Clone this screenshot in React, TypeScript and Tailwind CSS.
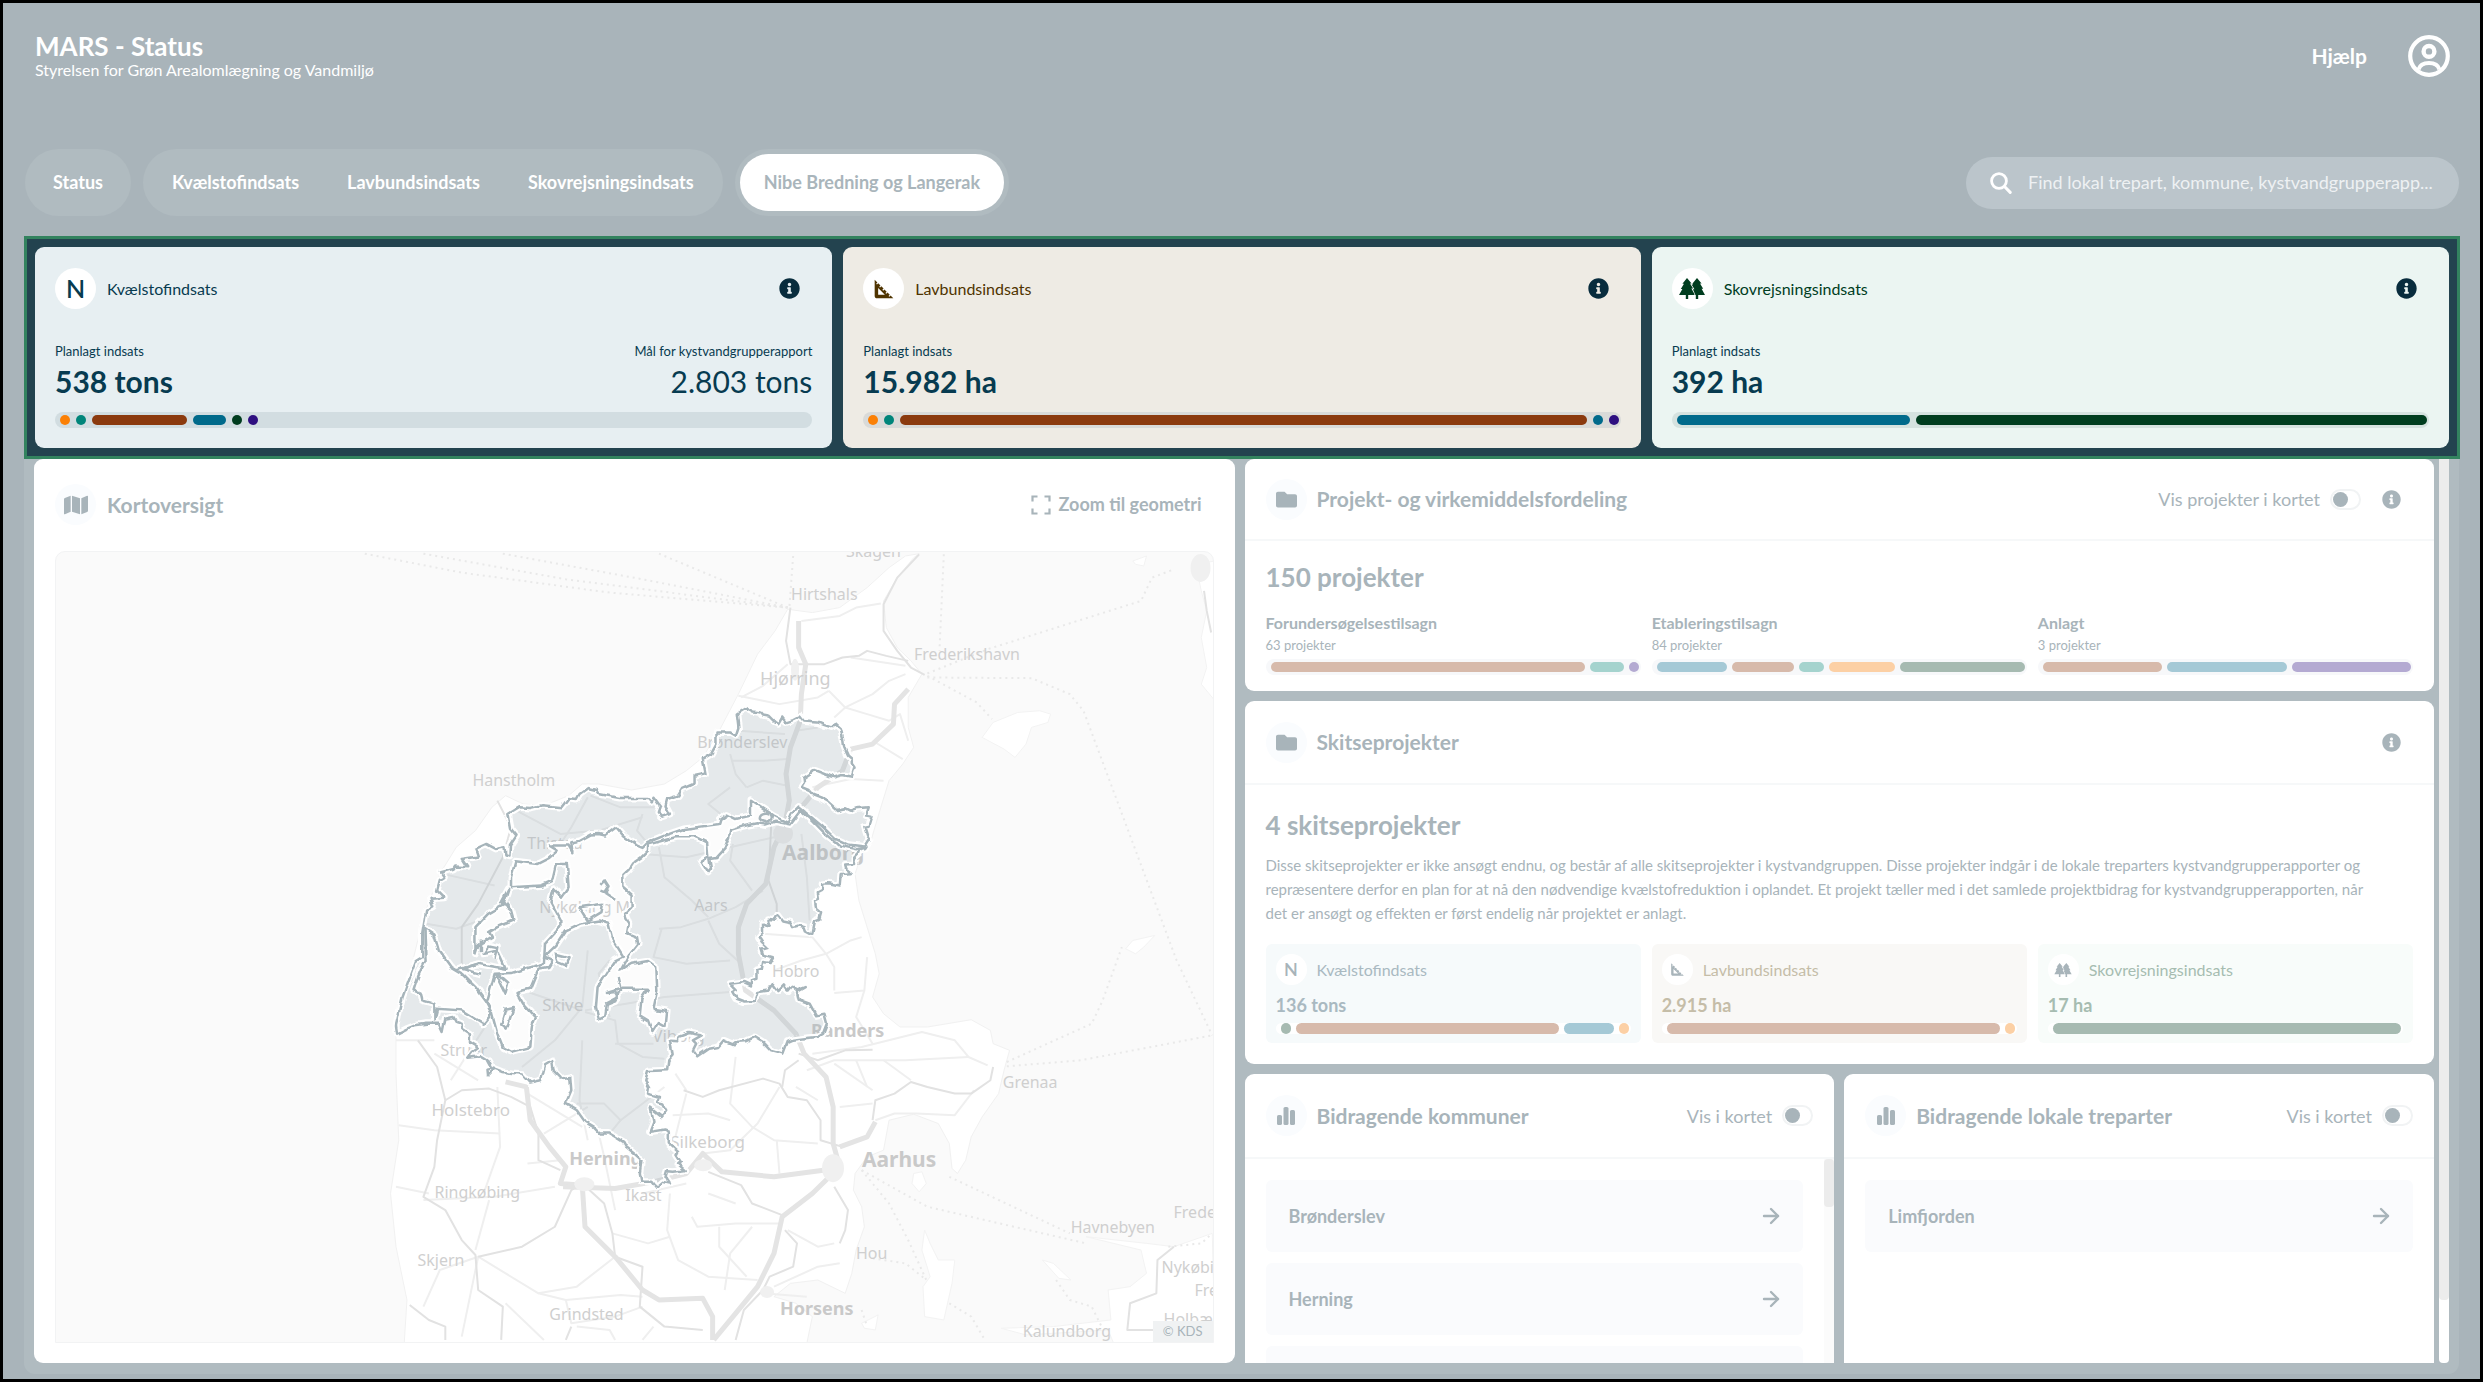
import React from 'react';
import { FaInfoCircle, FaMap, FaFolder } from 'react-icons/fa';
import { MdSquareFoot } from 'react-icons/md';
import { ArrowRight } from 'lucide-react';

type Segment = { color: string; size: number };

const ORANGE = 'bg-[#fb8005]';
const TEAL = 'bg-[#00857a]';
const BROWN = 'bg-[#8b3a0e]';
const BLUE = 'bg-[#006a8b]';
const GREEN = 'bg-[#003d1f]';
const PURPLE = 'bg-[#2e0f80]';

const ORANGE_SOFT = 'bg-[#fcd0a5]';
const TEAL_SOFT = 'bg-[#a5d3ce]';
const BROWN_SOFT = 'bg-[#d7baab]';
const BLUE_SOFT = 'bg-[#a5c9d6]';
const GREEN_SOFT = 'bg-[#a6bab1]';
const PURPLE_SOFT = 'bg-[#b4aad2]';

function Bar({ segments, className }: { segments: Segment[]; className: string }) {
  return (
    <div className={`flex rounded-full pl-[5px] pr-[2px] ${className}`}>
      {segments.map((s, i) => (
        <div key={i} className={`h-full min-w-[10px] rounded-full ${s.color}`} style={{ flex: `${s.size} 0 0` }} />
      ))}
    </div>
  );
}

function TreesIcon({ className }: { className?: string }) {
  return (
    <svg viewBox="0 0 26 21" className={className} fill="currentColor">
      <path d="M8 0 L12.6 5.6 H11 L14.2 10.4 H12.4 L15.4 16 V17 H9.2 V21 H6.8 V17 H0 L3.4 11 H1.8 L5 5.8 H3.4 Z" />
      <path d="M18 0 L22.6 5.6 H21 L24.2 10.8 H22.6 L26 17 H19.2 V21 H16.8 V17 H16.4 L13.9 11.2 H15.4 L12.6 6.4 H14 L13.5 5.4 Z" />
    </svg>
  );
}

function BarsIcon({ className }: { className?: string }) {
  return (
    <svg viewBox="0 0 18 18" className={className} fill="currentColor">
      <rect x="0" y="8" width="5" height="10" rx="1.6" />
      <rect x="6.5" y="0" width="5" height="18" rx="1.6" />
      <rect x="13" y="3" width="5" height="15" rx="1.6" />
    </svg>
  );
}

function UserIcon() {
  return (
    <svg viewBox="0 0 42 42" className="size-[42px]" fill="none" stroke="currentColor">
      <circle cx="21" cy="21" r="18.8" strokeWidth="4.2" />
      <circle cx="21" cy="16.4" r="5.4" strokeWidth="4.4" />
      <path d="M10.5 34.5 C12 29.5 16 28 21 28 C26 28 30 29.5 31.5 34.5" strokeWidth="4.2" />
    </svg>
  );
}

function InfoButton({ className }: { className: string }) {
  return (
    <button type="button" aria-label="Info" className={className}>
      <FaInfoCircle className="size-full" />
    </button>
  );
}

function Switch({ id, label }: { id: string; label: string }) {
  return (
    <div className="flex items-center gap-[10px]">
      <label htmlFor={id} className="text-[18px] leading-6">{label}</label>
      <input
        id={id}
        type="checkbox"
        className="relative h-[21px] w-[31px] appearance-none rounded-full border-2 border-[#f1f3f4] bg-white before:absolute before:left-[1px] before:top-[1px] before:size-[15px] before:rounded-full before:bg-[#a8b4ba] checked:before:left-[11px]"
      />
    </div>
  );
}

function IconDisc({ children }: { children: React.ReactNode }) {
  return (
    <span className="flex size-[41px] shrink-0 items-center justify-center rounded-full bg-[#fafcfe] text-[#a8b4ba]">
      {children}
    </span>
  );
}

type SummaryProps = {
  title: string;
  icon: React.ReactNode;
  tone: string;
  titleTone: string;
  value: string;
  goal?: string;
  track: string;
  segments: Segment[];
};

function SummaryCard({ title, icon, tone, titleTone, value, goal, track, segments }: SummaryProps) {
  return (
    <section className={`flex flex-col rounded-[9px] px-5 pb-5 pt-[21px] text-[#073b50] ${tone}`}>
      <div className={`flex items-center ${titleTone}`}>
        <span className="flex size-[41px] items-center justify-center rounded-full bg-white">{icon}</span>
        <h2 className="ml-[11px] text-[16px] leading-6">{title}</h2>
        <InfoButton className="ml-auto mr-3 size-[21px] text-[#082c3d]" />
      </div>
      <div className="mt-8 flex justify-between text-[13px] leading-5">
        <span>Planlagt indsats</span>
        {goal && <span>Mål for kystvandgrupperapport</span>}
      </div>
      <div className="flex justify-between text-[30px] leading-10">
        <span className="font-bold">{value}</span>
        {goal && <span>{goal}</span>}
      </div>
      <Bar segments={segments} className={`mt-[11px] h-4 gap-[6px] py-[3px] ${track}`} />
    </section>
  );
}

type PanelHeaderProps = { icon: React.ReactNode; title: string; height: string; children?: React.ReactNode };

function PanelHeader({ icon, title, height, children }: PanelHeaderProps) {
  return (
    <header className={`flex shrink-0 items-center border-b-2 border-[#f6f8f9] px-[21px] ${height}`}>
      <IconDisc>{icon}</IconDisc>
      <h2 className="ml-[10px] text-[21px] font-bold leading-6">{title}</h2>
      <div className="ml-auto flex items-center">{children}</div>
    </header>
  );
}

const phases: { name: string; count: string; segments: Segment[] }[] = [
  {
    name: 'Forundersøgelsestilsagn',
    count: '63 projekter',
    segments: [{ color: BROWN_SOFT, size: 314 }, { color: TEAL_SOFT, size: 34 }, { color: PURPLE_SOFT, size: 10 }],
  },
  {
    name: 'Etableringstilsagn',
    count: '84 projekter',
    segments: [
      { color: BLUE_SOFT, size: 71 },
      { color: BROWN_SOFT, size: 62 },
      { color: TEAL_SOFT, size: 25 },
      { color: ORANGE_SOFT, size: 66 },
      { color: GREEN_SOFT, size: 125 },
    ],
  },
  {
    name: 'Anlagt',
    count: '3 projekter',
    segments: [{ color: BROWN_SOFT, size: 1 }, { color: BLUE_SOFT, size: 1 }, { color: PURPLE_SOFT, size: 1 }],
  },
];

const sketches = [
  {
    title: 'Kvælstofindsats',
    value: '136 tons',
    icon: <span className="text-[18px] font-semibold">N</span>,
    tone: 'bg-[#f6fafb] text-[#a9b9c1]',
    segments: [{ color: GREEN_SOFT, size: 10 }, { color: BROWN_SOFT, size: 262 }, { color: BLUE_SOFT, size: 49 }, { color: ORANGE_SOFT, size: 10 }],
  },
  {
    title: 'Lavbundsindsats',
    value: '2.915 ha',
    icon: <MdSquareFoot className="size-[19px]" />,
    tone: 'bg-[#f9f8f6] text-[#c5bda8]',
    segments: [{ color: BROWN_SOFT, size: 333 }, { color: ORANGE_SOFT, size: 10 }],
  },
  {
    title: 'Skovrejsningsindsats',
    value: '17 ha',
    icon: <TreesIcon className="h-[14px] w-[18px]" />,
    tone: 'bg-[#f8fcfa] text-[#a6bcb1]',
    segments: [{ color: GREEN_SOFT, size: 1 }],
  },
];

function ListItem({ name }: { name: string }) {
  return (
    <li>
      <a href="#" className="flex h-[72px] items-center justify-between rounded-md bg-[#fafbfd] pl-[23px] pr-5 text-[18px] font-bold">
        {name}
        <ArrowRight className="size-6" strokeWidth={2.4} />
      </a>
    </li>
  );
}

const GRID = 'translate(324 -11) scale(0.5485 0.3333)';

const JUTLAND =
  'M45 2410 L50 2280 L30 2120 L20 1960 L35 1800 L30 1600 L30 1480 L55 1300 L80 1130 L110 1000 L140 920 L175 870 L205 800 L230 765 L262 790 L300 795 L345 765 L370 730 L400 730 L460 748 L520 730 L560 690 L590 650 L620 570 L655 460 L690 340 L722 270 L745 205 L790 215 L840 200 L890 140 L930 80 L960 45 L985 38 L975 50 L945 110 L920 180 L925 260 L945 320 L970 360 L990 400 L965 470 L965 560 L975 620 L955 670 L930 720 L915 800 L897 900 L880 940 L868 1000 L875 1080 L890 1160 L905 1240 L912 1300 L900 1370 L920 1420 L950 1460 L1000 1460 L1080 1438 L1115 1470 L1120 1510 L1150 1530 L1140 1590 L1130 1660 L1100 1730 L1080 1790 L1070 1860 L1055 1900 L1045 1885 L1040 1810 L1020 1750 L975 1722 L930 1740 L920 1830 L890 1850 L868 1900 L865 1950 L880 2000 L885 2060 L870 2130 L862 2200 L850 2260 L800 2220 L750 2230 L720 2270 L760 2290 L790 2330 L780 2410 Z';

const ISLANDS = [
  'M1120 545 L1165 515 L1205 510 L1225 520 L1220 545 L1190 560 L1180 610 L1160 650 L1140 625 L1100 590 Z',
  'M1375 1200 L1415 1185 L1395 1220 L1380 1240 L1362 1225 Z',
  'M975 1900 L990 1895 L998 1930 L985 1955 L972 1930 Z',
  'M995 2070 L1005 2110 L1020 2160 L1050 2160 L1045 2230 L1030 2340 L995 2330 L992 2240 L1005 2210 L990 2130 Z',
  'M1210 2160 L1230 2170 L1262 2220 L1240 2215 Z',
  'M880 2350 L910 2325 L905 2370 L885 2365 Z',
  'M1520 2080 L1450 2120 L1400 2110 L1290 2090 L1390 2130 L1400 2200 L1370 2240 L1330 2250 L1335 2340 L1230 2360 L1135 2365 L1180 2385 L1330 2370 L1340 2410 L1525 2410 Z',
  'M1525 60 L1490 70 L1500 150 L1510 210 L1500 290 L1510 380 L1500 430 L1525 480 Z',
  'M1375 60 L1400 45 L1395 75 L1380 70 Z',
];

const MOTORWAYS = [
  'M765 240 L765 320 L778 370 L770 460 L768 540 L750 620 L742 700 L748 780 L740 850 L720 920 L705 1030 L670 1090 L655 1160 L655 1240 L668 1350 L720 1410 L760 1480 L775 1540 L815 1610 L828 1700 L828 1810 L840 1880 L790 1960 L735 2030 L720 2140 L690 2240 L650 2320 L610 2400',
  'M230 1625 L268 1640 L275 1740 L310 1820 L340 1880 L330 1930 L370 1935 L375 2060 L430 2150 L480 2250 L510 2280 L590 2275 L608 2330 L608 2400',
  'M335 1940 L430 1945 L500 1925 L560 1900 L590 1840 L625 1895 L720 1910 L810 1890',
  'M965 445 L940 490 L938 550 L900 610 L860 625 L845 690 L800 740 L770 800',
  'M905 1745 L890 1790 L840 1820',
];

const MAJOR_ROADS = [
  'M985 40 L945 110 L920 190 L920 270 L945 330 L970 380 L995 402',
  'M750 200 L742 300 L750 370 L812 370 L845 350 L875 345 L890 330 L925 345 L965 360',
  'M120 1680 L150 1650 L200 1645 L240 1670 L275 1700 L290 1780 L290 1860 L330 1890',
  'M70 1500 L105 1580 L120 1680 L105 1800 L100 1880 L80 1970 L120 2010 L150 2100 L175 2145 L180 2250 L225 2300 L222 2400',
  'M180 2150 L260 2120 L320 2060 L350 1950 L370 1930',
  'M370 1930 L410 1990 L425 2080 L430 2150 L480 2180 L475 2300 L520 2360 L590 2370',
  'M555 1650 L590 1670 L620 1650 L700 1615 L730 1630 L745 1670 L780 1680 L805 1740 L805 1800 L845 1820',
  'M1120 1580 L1115 1620 L1080 1660 L1050 1660 L1000 1640 L970 1625 L940 1660 L905 1680 L900 1740',
  'M600 1895 L660 1935 L680 1990 L735 2025',
  'M830 1940 L855 2010 L850 2070 L840 2110',
  'M740 2070 L762 2110 L755 2180 L712 2210 L700 2250 L665 2310 L650 2400',
  'M715 850 L710 1020 L725 1090 L725 1120',
  'M55 2295 L90 2340 L120 2360 L120 2400',
  'M350 2360 L340 2400',
  'M765 1540 L800 1560 L850 1530 L900 1528',
  'M735 1640 L740 1590 L765 1560',
  'M215 780 L240 860 L225 950 L180 1090 L150 1160 L150 1280',
  'M1505 150 L1510 210 L1518 275',
  'M1450 2120 L1420 2160 L1418 2260 L1370 2290 L1365 2370 L1415 2370',
];

const MINOR_ROADS = [
  'M770 240 L840 225 L870 200 L915 188', 'M660 470 L700 435 L745 370', 'M655 465 L700 480 L730 490 L800 470 L820 450',
  'M820 450 L850 500 L900 460 L930 420 L960 400', 'M850 500 L830 530', 'M850 500 L890 520 L930 540 L950 520 L965 600',
  'M860 350 L960 375', 'M900 600 L955 655', 'M790 740 L860 715 L920 720', 'M760 570 L800 560', 'M655 570 L740 580',
  'M640 640 L650 700 L670 740', 'M670 740 L700 720 L745 735', 'M640 740 L600 790 L630 830', 'M645 660 L700 660 L745 655',
  'M380 770 L350 860 L330 910', 'M250 810 L330 880 L400 870 L480 830', 'M480 820 L470 870 L490 910', 'M385 765 L440 800 L520 800',
  'M510 920 L520 1010 L570 1080 L600 1130', 'M480 940 L560 950 L640 920 L720 890', 'M645 910 L640 960 L680 1050', 'M770 880 L780 1010 L785 1140',
  'M600 1135 L550 1160 L510 1165', 'M600 1135 L650 1100 L700 1050', 'M600 1140 L620 1210 L660 1270', 'M515 1165 L500 1250 L560 1270 L640 1260',
  'M115 1000 L210 1035', 'M85 1150 L140 1165 L200 1130', 'M380 1230 L370 1400 L320 1500 L260 1580', 'M375 1410 L450 1390 L520 1370 L640 1355',
  'M370 1410 L280 1360 L250 1340', 'M375 1415 L430 1440 L435 1510 L480 1550 L520 1555', 'M420 1430 L400 1300 L420 1260', 'M370 1500 L365 1680 L380 1800',
  'M360 1690 L410 1690 L440 1740 L520 1640', 'M440 1740 L420 1780', 'M500 1510 L430 1510', 'M700 1180 L790 1190 L815 1240 L830 1280 L830 1350',
  'M815 1240 L860 1200 L880 1190', 'M815 1240 L770 1260 L720 1290', 'M830 1358 L885 1350 L890 1250', 'M885 1350 L870 1430 L900 1510',
  'M780 1590 L830 1560 L960 1560 L1075 1550', 'M790 1540 L880 1520 L990 1475 L1050 1500 L1075 1550 L1110 1575', 'M830 1570 L900 1650', 'M870 1560 L890 1640',
  'M905 1740 L940 1720 L980 1720 L1050 1725 L1085 1650', 'M540 1600 L560 1650', 'M650 1550 L640 1690 L680 1760 L720 1800 L800 1810', 'M730 1640 L690 1750 L640 1830 L590 1840',
  'M535 1725 L600 1720 L640 1740', 'M560 1660 L540 1790', 'M725 1800 L730 1900', 'M570 2030 L580 2060 L650 2050 L730 2050', 'M620 2060 L620 2120 L670 2210',
  'M680 2060 L640 2140 L630 2250', 'M530 1960 L525 2070 L545 2160 L600 2210 L690 2220', 'M425 2080 L490 2110 L530 2090', 'M430 2150 L360 2240 L290 2260 L180 2150',
  'M180 2150 L110 2190 L80 2300', 'M180 2150 L150 2390', 'M290 2260 L340 2280 L440 2265 L480 2270', 'M340 2280 L350 2350 L430 2330 L480 2300', 'M200 1980 L175 2130',
  'M215 1640 L220 1820 L190 1960', 'M35 1755 L100 1770 L220 1780', 'M30 1940 L90 1960', 'M80 1980 L210 1970 L320 1940', 'M270 1870 L330 1860',
  'M300 1780 L380 1700', 'M270 1660 L370 1760', 'M200 1440 L130 1620', 'M100 1540 L180 1620', 'M30 1500 L100 1500', 'M430 2010 L410 1850 L400 1780',
  'M745 2070 L800 2120 L830 2110', 'M720 2240 L800 2180 L840 2170', 'M480 2400 L500 2360', 'M430 2400 L420 2370 L360 2360', 'M230 2290 L300 2400',
  'M480 1960 L560 1930', 'M600 1960 L650 1990', 'M800 1680 L760 1640', 'M840 1700 L900 1690', 'M700 2260 L780 2270', 'M920 1560 L970 1620',
];

const FERRIES = [
  'M-27 38 L150 95 L420 155 L745 200', 'M80 38 L340 115 L745 200', 'M225 38 L480 115 L745 200', 'M510 38 L745 200', 'M755 45 L748 200',
  'M1030 40 L1022 330', 'M1000 398 L1110 325 L1390 180 L1410 110 L1450 85', 'M1000 410 L1190 412 L1260 460 L1285 510 L1455 1260 L1520 1485',
  'M1000 405 L1090 485 L1118 535', 'M1145 1565 L1300 1450 L1320 1380 L1355 1220', 'M1145 1578 L1280 1560 L1520 1485', 'M880 1890 L1000 2000 L1290 2110',
  'M1040 1910 L1260 2080', 'M880 1890 L930 1990 L965 2100 L998 2220', 'M900 2155 L960 2170 L998 2220', 'M1040 2290 L1080 2330 L1105 2400',
  'M1235 2220 L1260 2280 L1300 2300 L1318 2360', 'M1440 2120 L1500 2110 L1520 2080', 'M880 2310 L890 2360',
];

const CATCHMENT =
  'M668 502 L680 512 L695 515 L700 524 L712 528 L722 545 L728 550 L735 530 L742 545 L755 538 L768 527 L775 542 L800 545 L812 553 L825 560 L832 550 L842 565 L846 592 L848 620 L855 645 L862 655 L862 668 L867 680 L862 708 L845 703 L830 710 L820 705 L793 688 L785 700 L774 712 L775 725 L770 738 L785 748 L792 762 L805 770 L818 782 L835 808 L850 803 L858 810 L870 803 L893 800 L888 825 L898 828 L893 855 L885 858 L890 885 L895 895 L885 922 L878 925 L875 940 L866 955 L868 970 L850 972 L852 985 L862 998 L842 1000 L840 1035 L820 1028 L808 1030 L808 1048 L800 1055 L802 1075 L795 1080 L797 1105 L806 1118 L803 1135 L795 1140 L790 1180 L778 1170 L776 1160 L765 1155 L755 1160 L750 1145 L735 1140 L727 1122 L722 1138 L708 1135 L712 1155 L700 1150 L700 1175 L692 1190 L698 1205 L708 1220 L697 1225 L700 1242 L718 1250 L712 1268 L700 1265 L698 1285 L688 1290 L688 1315 L678 1320 L678 1335 L665 1325 L640 1330 L652 1350 L645 1355 L652 1375 L665 1383 L685 1382 L690 1355 L710 1350 L718 1330 L728 1352 L738 1335 L745 1350 L752 1336 L762 1350 L778 1340 L762 1355 L765 1378 L785 1390 L790 1405 L797 1425 L812 1420 L817 1450 L810 1480 L800 1490 L780 1493 L755 1498 L745 1505 L737 1540 L715 1530 L700 1505 L685 1490 L668 1503 L650 1505 L645 1512 L628 1500 L618 1520 L600 1525 L580 1548 L572 1530 L578 1510 L572 1500 L588 1485 L565 1478 L545 1490 L545 1500 L530 1498 L535 1545 L527 1560 L525 1590 L490 1592 L485 1620 L492 1640 L490 1660 L510 1670 L507 1685 L518 1690 L525 1710 L515 1730 L495 1705 L500 1745 L493 1775 L520 1768 L528 1772 L528 1810 L545 1835 L542 1845 L550 1865 L545 1872 L557 1890 L535 1895 L525 1893 L522 1910 L530 1930 L515 1925 L505 1940 L498 1925 L478 1925 L475 1900 L478 1860 L465 1840 L450 1820 L445 1805 L420 1780 L402 1780 L390 1760 L375 1745 L360 1710 L340 1690 L350 1650 L348 1610 L330 1615 L318 1595 L315 1562 L302 1575 L295 1620 L275 1627 L260 1600 L240 1598 L225 1595 L210 1585 L198 1605 L197 1588 L205 1585 L197 1560 L185 1548 L160 1552 L168 1535 L180 1520 L165 1505 L165 1482 L150 1465 L150 1450 L140 1445 L135 1430 L120 1435 L115 1475 L108 1450 L85 1450 L65 1455 L50 1465 L32 1480 L30 1455 L42 1370 L55 1310 L66 1262 L78 1250 L78 1180 L85 1110 L98 1098 L93 1075 L118 1072 L105 1050 L110 1018 L118 1010 L112 995 L135 985 L138 978 L160 980 L150 955 L180 948 L175 925 L195 910 L212 925 L228 920 L230 945 L237 948 L238 915 L250 885 L240 865 L235 820 L255 800 L275 802 L295 794 L332 800 L345 772 L360 775 L365 760 L380 742 L395 748 L400 760 L440 772 L490 772 L497 785 L500 768 L512 795 L508 815 L516 828 L530 820 L522 795 L525 775 L545 765 L552 745 L575 728 L575 705 L595 698 L590 655 L605 640 L615 610 L615 575 L640 575 L650 585 L655 560 L652 518 Z';

const FJORDS = [
  'M480 922 L490 905 L520 885 L555 865 L600 855 L620 850 L622 838 L635 822 L650 835 L678 825 L678 780 L700 805 L718 825 L745 847 L752 820 L765 798 L785 825 L810 860 L832 895 L855 912 L885 918 L870 926 L840 915 L815 882 L790 840 L770 810 L758 835 L750 852 L722 843 L705 852 L690 848 L660 858 L640 868 L638 890 L630 925 L615 952 L602 955 L605 985 L600 997 L587 962 L600 950 L598 905 L580 890 L540 890 L490 912 L490 930 L478 950 L465 965 L455 990 L445 1005 L445 1040 L460 1062 L460 1100 L448 1120 L455 1150 L452 1178 L470 1190 L472 1210 L455 1245 L440 1290 L460 1270 L490 1262 L505 1280 L507 1350 L500 1405 L525 1412 L522 1460 L508 1448 L498 1475 L490 1440 L475 1425 L478 1375 L490 1345 L440 1345 L430 1380 L415 1390 L412 1425 L400 1435 L395 1400 L398 1340 L415 1295 L430 1260 L445 1248 L425 1195 L418 1150 L400 1140 L365 1150 L340 1170 L322 1215 L300 1250 L315 1262 L308 1280 L290 1285 L275 1345 L250 1355 L262 1390 L285 1430 L278 1460 L275 1520 L240 1535 L225 1522 L215 1480 L205 1420 L195 1390 L210 1300 L240 1298 L265 1285 L300 1270 L302 1210 L330 1160 L330 1140 L312 1085 L318 1045 L332 1070 L345 1040 L342 970 L322 970 L315 1020 L295 1035 L240 1040 L240 1010 L248 962 L290 970 L308 955 L325 930 L310 915 L345 915 L352 935 L350 905 L365 900 L385 882 L400 880 L412 885 L432 860 L445 885 L470 915 Z',
  'M82 1165 L100 1185 L108 1230 L130 1280 L150 1300 L175 1340 L195 1385 L205 1420 L190 1450 L150 1410 L105 1405 L100 1440 L100 1390 L78 1380 L75 1360 L62 1350 L70 1310 L75 1290 L84 1262 Z',
  'M235 1045 L222 1085 L240 1110 L245 1140 L215 1160 L200 1175 L205 1190 L180 1215 L175 1240 L175 1160 L198 1120 L225 1095 Z',
];

const INNER_LINES = [
  'M140 1290 L180 1270 L230 1285 L215 1230 L190 1240 L200 1215 L215 1220 L210 1255', 'M240 1110 L232 1090', 'M365 1100 L408 1090 L405 1115 L380 1140 Z',
  'M405 1030 L410 1020 L418 1040 L412 1055 L430 1075', 'M405 1050 L412 1055', 'M320 1240 L345 1250 L340 1275 L325 1265 Z', 'M412 1390 L435 1370 L430 1355 L415 1358 L440 1345 L435 1310',
  'M215 1300 L235 1330 L230 1360 L212 1300', 'M245 1400 L230 1405 L222 1450 L232 1465 Z', 'M185 1200 L185 1235', 'M180 1270 L150 1285 L185 1300',
];

type MapLabel = { x: number; y: number; text: string; size?: number };

const labels: MapLabel[] = [
  { x: 736, y: 48, text: 'Hirtshals' }, { x: 859, y: 108, text: 'Frederikshavn' }, { x: 705, y: 133, text: 'Hjørring', size: 18 },
  { x: 642, y: 196, text: 'Brønderslev' }, { x: 417, y: 234, text: 'Hanstholm' }, { x: 472, y: 297, text: 'Thisted' },
  { x: 484, y: 361, text: 'Nykøbing M' }, { x: 639, y: 359, text: 'Aars' }, { x: 717, y: 426, text: 'Hobro' },
  { x: 487, y: 460, text: 'Skive', size: 17 }, { x: 385, y: 505, text: 'Struer' }, { x: 597, y: 491, text: 'Viborg', size: 17 },
  { x: 948, y: 537, text: 'Grenaa' }, { x: 376, y: 565, text: 'Holstebro', size: 17 }, { x: 615, y: 597, text: 'Silkeborg', size: 17 },
  { x: 379, y: 647, text: 'Ringkøbing' }, { x: 570, y: 650, text: 'Ikast' }, { x: 362, y: 715, text: 'Skjern' },
  { x: 494, y: 769, text: 'Grindsted' }, { x: 1016, y: 682, text: 'Havnebyen' }, { x: 801, y: 708, text: 'Hou' },
  { x: 968, y: 786, text: 'Kalundborg' }, { x: 1119, y: 667, text: 'Frederiksværk' }, { x: 1107, y: 722, text: 'Nykøbing' },
  { x: 1140, y: 745, text: 'Fredens' }, { x: 1109, y: 774, text: 'Holbæk' }, { x: 791, y: 5, text: 'Skagen' },
];

const cityLabels: MapLabel[] = [
  { x: 727, y: 308, text: 'Aalborg', size: 21 }, { x: 756, y: 486, text: 'Randers' }, { x: 807, y: 616, text: 'Aarhus', size: 21 },
  { x: 514, y: 614, text: 'Herning' }, { x: 725, y: 764, text: 'Horsens' },
];

function OverviewMap() {
  const line = { fill: 'none', vectorEffect: 'non-scaling-stroke' as const, strokeLinejoin: 'round' as const };
  const borders = [CATCHMENT, ...FJORDS, ...INNER_LINES];
  return (
    <svg viewBox="0 0 1158 791" preserveAspectRatio="xMidYMid slice" className="absolute inset-0 size-full">
      <defs>
        {/* breaks straight segments up into a ragged coastline */}
        <filter id="coast" x="0" y="0" width="1158" height="791" filterUnits="userSpaceOnUse">
          <feTurbulence type="fractalNoise" baseFrequency="0.12" numOctaves="1" seed="4" result="noise" />
          <feDisplacementMap in="SourceGraphic" in2="noise" scale="6" xChannelSelector="R" yChannelSelector="G" />
        </filter>
      </defs>
      <g transform={GRID}>
        <path d={JUTLAND} fill="#ffffff" stroke="#f1f1f1" vectorEffect="non-scaling-stroke" />
        {ISLANDS.map((d) => <path key={d} d={d} fill="#ffffff" stroke="#f3f3f3" vectorEffect="non-scaling-stroke" />)}
        {MINOR_ROADS.map((d) => <path key={d} d={d} {...line} stroke="#efefef" strokeWidth="2" />)}
        {MAJOR_ROADS.map((d) => <path key={d} d={d} {...line} stroke="#e2e2e2" strokeWidth="2" />)}
        {MOTORWAYS.map((d) => <path key={d} d={d} {...line} stroke="#e4e4e4" strokeWidth="5" />)}
        {FERRIES.map((d) => <path key={d} d={d} {...line} stroke="#e9e9e9" strokeWidth="2" strokeDasharray="2 4" />)}
      </g>
      <g fill="#f0f0f0">
        <ellipse cx="778" cy="617" rx="11" ry="14" />
        <ellipse cx="728" cy="282" rx="10" ry="10" />
        <ellipse cx="529" cy="633" rx="10" ry="7" />
        <ellipse cx="740" cy="118" rx="4" ry="11" />
        <ellipse cx="648" cy="614" rx="9" ry="6" />
        <ellipse cx="1146" cy="16" rx="10" ry="14" />
        <ellipse cx="712" cy="741" rx="7" ry="6" />
      </g>
      <g transform={GRID}>
        {FJORDS.map((d) => <path key={d} d={d} fill="#fcfcfc" />)}
      </g>
      <g fill="#cfcfcf" fontFamily="'Noto Sans', sans-serif">
        {labels.map((l) => <text key={l.text} x={l.x} y={l.y} fontSize={l.size ?? 16}>{l.text}</text>)}
      </g>
      <g fill="#c9c9c9" fontFamily="'Noto Sans', sans-serif" fontWeight="700">
        {cityLabels.map((l) => <text key={l.text} x={l.x} y={l.y} fontSize={l.size ?? 18}>{l.text}</text>)}
      </g>
      <g filter="url(#coast)">
        <g transform={GRID} strokeLinejoin="round">
          <path d={[CATCHMENT, ...FJORDS].join(' ')} fill="#a3b1b8" fillOpacity="0.28" fillRule="evenodd" />
          {borders.map((d) => <path key={d} d={d} {...line} stroke="#ffffff" strokeWidth="7" />)}
          {borders.map((d) => <path key={d} d={d} {...line} stroke="#a6b4ba" strokeWidth="2.5" />)}
          <ellipse cx="705" cy="830" rx="11" ry="14" fill="#fcfcfc" stroke="#a6b4ba" strokeWidth="2.5" vectorEffect="non-scaling-stroke" />
        </g>
      </g>
    </svg>
  );
}

export default function App() {
  return (
    <div className="flex h-screen flex-col overflow-hidden border-[3px] border-black bg-[#a9b4ba] font-['Lato',sans-serif] text-[#a8b4ba]">
      <header className="flex h-[146px] shrink-0 items-start justify-between pl-8 pr-[30px] pt-[27px] text-white">
        <div>
          <h1 className="text-[26px] font-bold leading-8">MARS - Status</h1>
          <p className="text-[16px] leading-4">Styrelsen for Grøn Arealomlægning og Vandmiljø</p>
        </div>
        <div className="flex items-center gap-[41px] pt-[5px]">
          <a href="#" className="text-[21px] font-bold">Hjælp</a>
          <button type="button" aria-label="Profil"><UserIcon /></button>
        </div>
      </header>

      <div className="flex shrink-0 items-center justify-between pl-[22px] pr-[21px]">
        <nav className="flex h-[67px] gap-3 text-[18px] font-bold text-white">
          <div className="flex items-center rounded-full bg-[#b0bbc0] px-7">
            <a href="#">Status</a>
          </div>
          <div className="flex items-center gap-12 rounded-full bg-[#b0bbc0] px-[29px]">
            <a href="#">Kvælstofindsats</a>
            <a href="#">Lavbundsindsats</a>
            <a href="#">Skovrejsningsindsats</a>
          </div>
          <div className="flex rounded-full bg-[#b0bbc0] p-[5px]">
            <a href="#" className="flex items-center rounded-full bg-white px-6 text-[#a9b5bb]">Nibe Bredning og Langerak</a>
          </div>
        </nav>
        <div className="flex h-[52px] w-[493px] items-center rounded-full bg-[#bbc5cb] pl-6 pr-5">
          <svg viewBox="0 0 22 22" className="size-[22px] shrink-0 text-white" fill="none" stroke="currentColor" strokeLinecap="round">
            <circle cx="9" cy="9" r="7.4" strokeWidth="2.8" />
            <path d="M14.5 14.5 L20.2 20.4" strokeWidth="3" />
          </svg>
          <input
            type="text"
            aria-label="Søg"
            placeholder="Find lokal trepart, kommune, kystvandgrupperapp..."
            className="ml-4 min-w-0 flex-1 bg-transparent text-[18px] text-white outline-none placeholder:text-[#eef1f3]"
          />
        </div>
      </div>

      <div className="ml-[21px] mr-5 mt-5 grid shrink-0 grid-cols-3 gap-[11px] border-[3px] border-[#33835f] bg-[#23434f] p-2">
        <SummaryCard
          title="Kvælstofindsats"
          icon={<span className="text-[25px] font-semibold leading-none">N</span>}
          tone="bg-[#e7eff2]"
          titleTone="text-[#073b50]"
          value="538 tons"
          goal="2.803 tons"
          track="bg-[#d2dde1]"
          segments={[
            { color: ORANGE, size: 10 },
            { color: TEAL, size: 10 },
            { color: BROWN, size: 95 },
            { color: BLUE, size: 33 },
            { color: GREEN, size: 10 },
            { color: PURPLE, size: 10 },
            { color: 'bg-transparent', size: 545 },
          ]}
        />
        <SummaryCard
          title="Lavbundsindsats"
          icon={<MdSquareFoot className="size-[28px]" />}
          tone="bg-[#eeebe4]"
          titleTone="text-[#4f3400]"
          value="15.982 ha"
          track="bg-[#d9dad8]"
          segments={[
            { color: ORANGE, size: 10 },
            { color: TEAL, size: 10 },
            { color: BROWN, size: 686 },
            { color: BLUE, size: 10 },
            { color: PURPLE, size: 10 },
          ]}
        />
        <SummaryCard
          title="Skovrejsningsindsats"
          icon={<TreesIcon className="h-[21px] w-[26px]" />}
          tone="bg-[#ebf5f2]"
          titleTone="text-[#003d1f]"
          value="392 ha"
          track="bg-[#d5e2df]"
          segments={[{ color: BLUE, size: 233 }, { color: GREEN, size: 511 }]}
        />
      </div>

      <main className="mx-[21px] mb-[5px] flex min-h-0 flex-1 rounded-b-[11px] bg-[#b0bbc0] px-[10px] pb-[11px]">
        <div className="grid min-h-0 min-w-0 flex-1 grid-cols-[1200fr_1189fr] grid-rows-[minmax(0,1fr)] gap-[10px]">
          <section className="flex min-w-0 flex-col rounded-[9px] bg-white px-[21px] pb-5 pt-[25px]">
            <div className="flex items-center">
              <IconDisc><FaMap className="size-6" /></IconDisc>
              <h2 className="ml-[11px] text-[21px] font-bold leading-6">Kortoversigt</h2>
              <button type="button" className="ml-auto mr-3 flex items-center gap-2 text-[18px] font-bold">
                <svg viewBox="0 0 20 20" className="size-5" fill="none" stroke="currentColor" strokeWidth="2.2">
                  <path d="M1.5 6.5 V1.5 H6.5 M13.5 1.5 H18.5 V6.5 M18.5 13.5 V18.5 H13.5 M6.5 18.5 H1.5 V13.5" />
                </svg>
                Zoom til geometri
              </button>
            </div>
            <div className="relative mt-[26px] min-h-0 flex-1 overflow-hidden rounded-t-[10px] border border-[#f2f3f4] bg-[#fafafa]">
              <OverviewMap />
              <span className="absolute bottom-0 right-0 bg-[#f0f2f3] px-[10px] text-[13px] leading-[21px]">© KDS</span>
            </div>
          </section>

          <div className="flex min-w-0 flex-col gap-[10px]">
            <section className="shrink-0 rounded-[9px] bg-white">
              <PanelHeader icon={<FaFolder className="size-[21px]" />} title="Projekt- og virkemiddelsfordeling" height="h-[82px]">
                <Switch id="projects-on-map" label="Vis projekter i kortet" />
                <InfoButton className="ml-[21px] mr-3 size-[19px]" />
              </PanelHeader>
              <div className="px-[21px] pb-4 pt-[18px]">
                <p className="text-[26px] font-bold leading-9">150 projekter</p>
                <div className="mt-[18px] grid grid-cols-3 gap-[11px]">
                  {phases.map((p) => (
                    <div key={p.name}>
                      <h3 className="text-[16px] font-bold leading-5">{p.name}</h3>
                      <p className="text-[13px] leading-6">{p.count}</p>
                      <Bar segments={p.segments} className="mt-[2px] h-4 gap-[5px] bg-[#f7f8fa] py-[3px]" />
                    </div>
                  ))}
                </div>
              </div>
            </section>

            <section className="shrink-0 rounded-[9px] bg-white">
              <PanelHeader icon={<FaFolder className="size-[21px]" />} title="Skitseprojekter" height="h-[84px]">
                <InfoButton className="mr-3 size-[19px]" />
              </PanelHeader>
              <div className="px-[21px] pb-[21px] pt-[22px]">
                <p className="text-[26px] font-bold leading-9">4 skitseprojekter</p>
                <p className="mt-[10px] text-[15px] leading-6">
                  Disse skitseprojekter er ikke ansøgt endnu, og består af alle skitseprojekter i kystvandgruppen. Disse projekter indgår i de lokale treparters kystvandgrupperapporter og
                  <br />
                  repræsentere derfor en plan for at nå den nødvendige kvælstofreduktion i oplandet. Et projekt tæller med i det samlede projektbidrag for kystvandgrupperapporten, når
                  <br />
                  det er ansøgt og effekten er først endelig når projektet er anlagt.
                </p>
                <div className="mt-[19px] grid grid-cols-3 gap-[11px]">
                  {sketches.map((s) => (
                    <div key={s.title} className={`rounded-md px-[10px] pb-[9px] pt-[10px] ${s.tone}`}>
                      <div className="flex items-center gap-[10px]">
                        <span className="flex size-[31px] items-center justify-center rounded-full bg-white text-[#a8b4ba]">{s.icon}</span>
                        <h3 className="text-[16px] leading-5">{s.title}</h3>
                      </div>
                      <p className="mt-2 text-[18px] font-bold leading-6">{s.value}</p>
                      <Bar segments={s.segments} className="mt-[6px] h-[11px] gap-[5px] bg-white" />
                    </div>
                  ))}
                </div>
              </div>
            </section>

            <div className="grid min-h-0 flex-1 grid-cols-2 grid-rows-[minmax(0,1fr)] gap-[10px]">
              <section className="flex min-h-0 flex-col overflow-hidden rounded-t-[9px] bg-white">
                <PanelHeader icon={<BarsIcon className="size-[18px]" />} title="Bidragende kommuner" height="h-[85px]">
                  <Switch id="municipalities-on-map" label="Vis i kortet" />
                </PanelHeader>
                <div className="flex min-h-0 flex-1">
                  <ul className="flex min-w-0 flex-1 flex-col gap-[11px] overflow-hidden px-[21px] pt-[21px]">
                    <ListItem name="Brønderslev" />
                    <ListItem name="Herning" />
                    <ListItem name="Hjørring" />
                  </ul>
                  <div className="w-[10px] bg-[#fbfbfb]">
                    <div className="h-12 rounded-sm bg-[#ececec]" />
                  </div>
                </div>
              </section>
              <section className="flex min-h-0 flex-col overflow-hidden rounded-t-[9px] bg-white">
                <PanelHeader icon={<BarsIcon className="size-[18px]" />} title="Bidragende lokale treparter" height="h-[85px]">
                  <Switch id="tripartites-on-map" label="Vis i kortet" />
                </PanelHeader>
                <ul className="px-[21px] pt-[21px]">
                  <ListItem name="Limfjorden" />
                </ul>
              </section>
            </div>
          </div>
        </div>

        <div className="ml-[5px] w-[10px] shrink-0 overflow-hidden rounded-b-sm bg-white">
          <div className="h-[93%] rounded-b-sm bg-[#ececec]" />
        </div>
      </main>
    </div>
  );
}
